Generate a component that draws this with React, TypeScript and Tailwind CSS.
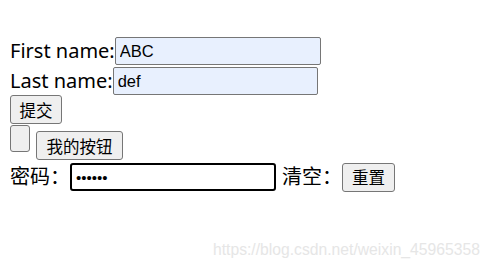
export default function App() {
  const label = "text-[20px] leading-[28px] text-black [font-family:'Noto_Sans','Noto_Sans_CJK_SC',sans-serif]";
  const input =
    "h-[28px] border border-[#767676] rounded-[2px] bg-[#e8f0fe] px-[4px] text-[16.5px] text-black [font-family:'Liberation_Sans',Arial,sans-serif] outline-none";
  const btn =
    "flex items-center justify-center border border-[#767676] rounded-[3px] bg-[#efefef] text-[16.5px] text-black [font-family:'Noto_Sans_CJK_SC',sans-serif] leading-[20px]";
  return (
    <div className="relative w-[493px] h-[270px] bg-white overflow-hidden">
      <div className="flex flex-col items-start pl-[10px] pt-[37px]">
        <div className="flex items-center h-[28px]">
          <span className={label}>First name:</span>
          <input className={`${input} w-[206px]`} defaultValue="ABC" />
        </div>
        <div className="flex items-center h-[28px] mt-[2px]">
          <span className={label}>Last name:</span>
          <input className={`${input} w-[205px]`} defaultValue="def" />
        </div>
        <button className={`${btn} w-[52px] h-[29px]`}>提交</button>
        <div className="flex items-start mt-[1px]">
          <button className={`${btn} w-[20px] h-[27px]`}></button>
          <button className={`${btn} w-[87px] h-[29px] ml-[6px] mt-[6px]`}>我的按钮</button>
        </div>
        <div className="flex items-center mt-[2px] h-[30px]">
          <span className={label}>密码：</span>
          <input
            type="password"
            autoFocus
            className="w-[206px] h-[28px] border-2 border-black rounded-[3px] bg-white px-[4px] text-[15px] [font-family:'Liberation_Sans',Arial,sans-serif] outline-none caret-black"
            defaultValue="123456"
          />
          <span className={`${label} ml-[6px]`}>清空：</span>
          <button className={`${btn} w-[53px] h-[29px]`}>重置</button>
        </div>
      </div>
      <div className="absolute left-[213px] top-[238px] text-[15.7px] text-[#e6e6e6] [font-family:'Liberation_Sans',Arial,sans-serif]">
        https://blog.csdn.net/weixin_45965358
      </div>
    </div>
  );
}
